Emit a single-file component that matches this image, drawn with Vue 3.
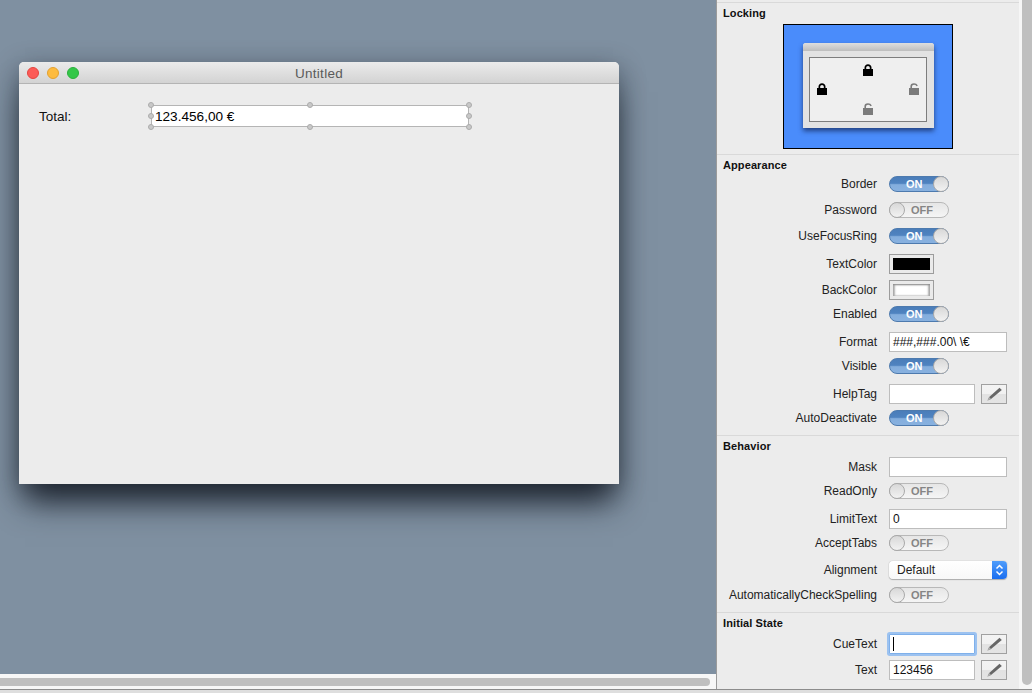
<script setup>
const handles = [
  ['l', 't'], ['c', 't'], ['r', 't'],
  ['l', 'm'], ['r', 'm'],
  ['l', 'b'], ['c', 'b'], ['r', 'b']
]
const sections = [
  {
    title: 'Appearance',
    rows: [
      { label: 'Border', type: 'on' },
      { label: 'Password', type: 'off' },
      { label: 'UseFocusRing', type: 'on' },
      { label: 'TextColor', type: 'color', swatch: 'black' },
      { label: 'BackColor', type: 'color', swatch: 'white' },
      { label: 'Enabled', type: 'on' },
      { label: 'Format', type: 'field', value: '###,###.00\\ \\€' },
      { label: 'Visible', type: 'on' },
      { label: 'HelpTag', type: 'edit', value: '' },
      { label: 'AutoDeactivate', type: 'on' }
    ]
  },
  {
    title: 'Behavior',
    rows: [
      { label: 'Mask', type: 'field', value: '' },
      { label: 'ReadOnly', type: 'off' },
      { label: 'LimitText', type: 'field', value: '0' },
      { label: 'AcceptTabs', type: 'off' },
      { label: 'Alignment', type: 'popup', value: 'Default' },
      { label: 'AutomaticallyCheckSpelling', type: 'off' }
    ]
  },
  {
    title: 'Initial State',
    rows: [
      { label: 'CueText', type: 'edit', value: '', focus: true },
      { label: 'Text', type: 'edit', value: '123456' }
    ]
  }
]
const rowClass = (r) => ({
  on: 'm10', off: 'm10', popup: 'm8'
}[r.type] || 'm6')
</script>

<template>
  <div class="app">
    <div class="main">
      <div class="left">
        <div class="canvas">
          <div class="window">
            <div class="titlebar">
              <div class="lights">
                <span class="light red"></span>
                <span class="light yellow"></span>
                <span class="light green"></span>
              </div>
              <span class="wtitle">Untitled</span>
            </div>
            <div class="wbody">
              <span class="total">Total:</span>
              <div class="selfield">
                <span class="seltext">123.456,00 €</span>
                <i v-for="h in handles" :key="h.join()" class="handle" :class="[h[0], h[1]]"></i>
              </div>
            </div>
          </div>
        </div>
        <div class="htrack"><div class="hthumb"></div></div>
      </div>

      <div class="panel">
        <div class="content">
          <section class="section locking">
            <h3 class="head">Locking</h3>
            <div class="lockbox">
              <div class="miniwin">
                <div class="minibar"></div>
                <div class="miniinner">
                  <svg class="lock lock-top" viewBox="0 0 10 12"><path fill="#000" fill-rule="evenodd" d="M1.5 5V3.6C1.5 1.5 3 .2 5 .2s3.5 1.3 3.5 3.4V5H10v7H0V5zM3.2 5h3.6V3.7C6.8 2.6 6 1.9 5 1.9s-1.8.7-1.8 1.8z"/></svg>
                  <div class="midlocks">
                    <svg class="lock" viewBox="0 0 10 12"><path fill="#000" fill-rule="evenodd" d="M1.5 5V3.6C1.5 1.5 3 .2 5 .2s3.5 1.3 3.5 3.4V5H10v7H0V5zM3.2 5h3.6V3.7C6.8 2.6 6 1.9 5 1.9s-1.8.7-1.8 1.8z"/></svg>
                    <svg class="lock" viewBox="0 0 10 12"><path fill="#7b7b7b" d="M0 5h10v7H0z"/><path fill="none" stroke="#7b7b7b" stroke-width="1.6" d="M2.2 5V3.4C2.2 1.9 3.4 1 5 1c1.4 0 2.5.6 3.2 1.8"/></svg>
                  </div>
                  <svg class="lock lock-low" viewBox="0 0 10 12"><path fill="#7b7b7b" d="M0 5h10v7H0z"/><path fill="none" stroke="#7b7b7b" stroke-width="1.6" d="M2.2 5V3.4C2.2 1.9 3.4 1 5 1c1.4 0 2.5.6 3.2 1.8"/></svg>
                </div>
              </div>
            </div>
          </section>

          <section v-for="s in sections" :key="s.title" class="section">
            <h3 class="head">{{ s.title }}</h3>
            <div
              v-for="r in s.rows"
              :key="r.label"
              class="row"
              :class="rowClass(r)"
            >
              <span class="label">{{ r.label }}</span>

              <div v-if="r.type === 'on'" class="switch on">
                <span class="swtext">ON</span><i class="knob"></i>
              </div>
              <div v-else-if="r.type === 'off'" class="switch off">
                <i class="knob"></i><span class="swtext">OFF</span>
              </div>
              <div v-else-if="r.type === 'color'" class="swatch">
                <div class="swatch-in" :class="r.swatch"></div>
              </div>
              <div v-else-if="r.type === 'field'" class="tf wide">{{ r.value }}</div>
              <div v-else-if="r.type === 'popup'" class="popup">
                <span>{{ r.value }}</span>
                <div class="stepper">
                  <svg viewBox="0 0 15 18" width="15" height="18"><path fill="none" stroke="#fff" stroke-width="1.5" d="M4.5 7.5 7.5 4.5l3 3M4.5 10.5l3 3 3-3"/></svg>
                </div>
              </div>
              <template v-else>
                <div class="tf short" :class="{ focus: r.focus }">
                  <i v-if="r.focus" class="caret"></i>{{ r.value }}
                </div>
                <div class="pencil">
                  <svg viewBox="0 0 24 18" width="24" height="18"><path d="M5.5 15.5 7.2 12 17.5 2.8l2.3 2.3L9 14z" fill="#666"/><path d="M5.5 15.500 7.2 12 9 14z" fill="#b0b0b0"/></svg>
                </div>
              </template>
            </div>
          </section>
        </div>
        <div class="vtrack"><div class="vthumb"></div></div>
      </div>
    </div>
    <div class="statusline"></div>
  </div>
</template>

<style scoped>
.app {
  width: 1032px;
  height: 693px;
  overflow: hidden;
  display: flex;
  flex-direction: column;
  font-family: "Liberation Sans", Arial, sans-serif;
  color: #222;
  background: #e4e4e4;
}
.main { display: flex; height: 689px; }
.left { width: 716px; display: flex; flex-direction: column; }
.canvas {
  height: 674px;
  background: #7f90a1;
  padding: 62px 0 0 19px;
  box-sizing: border-box;
  overflow: hidden;
}
.window {
  width: 600px;
  height: 422px;
  background: #ececec;
  border-radius: 5px 5px 0 0;
  box-shadow: 0 24px 30px -6px rgba(20, 26, 36, .85), 0 6px 26px rgba(20, 26, 36, .42);
}
.titlebar {
  height: 21px;
  border-bottom: 1px solid #b4b4b4;
  border-radius: 5px 5px 0 0;
  background: linear-gradient(#ebebeb, #d3d3d3);
  display: flex;
  align-items: center;
  position: relative;
}
.lights { display: flex; gap: 8px; padding-left: 8px; }
.light { width: 12px; height: 12px; border-radius: 50%; box-sizing: border-box; }
.red { background: #fc5b57; border: 1px solid #e5453f; }
.yellow { background: #fdbb3f; border: 1px solid #e4a12f; }
.green { background: #34c749; border: 1px solid #2bb03c; }
.wtitle {
  position: absolute;
  left: 0; right: 0; top: 4px;
  text-align: center;
  font-size: 13.5px;
  line-height: 16px;
  letter-spacing: .3px;
  color: #5a5a5a;
}
.wbody { display: flex; padding: 21px 0 0 20px; align-items: flex-start; }
.total { width: 112px; font-size: 13.5px; line-height: 23px; color: #111; }
.selfield {
  width: 318px;
  height: 22px;
  box-sizing: border-box;
  background: #fff;
  border: 1px solid #b5b5b5;
  position: relative;
  padding-left: 3px;
}
.seltext { font-size: 13.6px; line-height: 21px; color: #000; display: block; }
.handle {
  position: absolute;
  width: 6px;
  height: 6px;
  border-radius: 50%;
  background: #c8c8c8;
  border: 1px solid #ababab;
  box-sizing: border-box;
}
.handle.l { left: -4px; }
.handle.c { left: 155px; }
.handle.r { right: -4px; }
.handle.t { top: -4px; }
.handle.m { top: 7px; }
.handle.b { bottom: -4px; }

.htrack { height: 15px; background: #f7f7f7; padding-top: 4px; box-sizing: border-box; }
.hthumb { width: 710px; height: 8px; background: #bfbfbf; border-radius: 0 4px 4px 0; }

.panel {
  width: 316px;
  box-sizing: border-box;
  border-left: 1px solid #9b9b9b;
  display: flex;
  background: #ececec;
}
.content { width: 302px; padding-top: 2px; }
.vtrack { width: 13px; background: #f6f6f6; padding: 0 0 4px 3px; box-sizing: border-box; }
.vthumb { height: 100%; background: #bfbfbf; border-radius: 0 0 5px 5px; }
.statusline { height: 4px; border-top: 1px solid #8c8c8c; background: #dedede; box-sizing: border-box; }

.section { border-top: 1px solid #d9d9d9; padding-bottom: 9px; }
.section.locking { padding-bottom: 5px; }
.head {
  margin: 0;
  padding-left: 6px;
  height: 21px;
  font-size: 11px;
  font-weight: 700;
  color: #111;
  line-height: 21px;
  letter-spacing: .1px;
}

.lockbox {
  margin-left: 66px;
  width: 170px;
  height: 125px;
  box-sizing: border-box;
  border: 1px solid #000;
  background: #4a8cfb;
  padding: 18px 0 0 19px;
}
.miniwin {
  width: 131px;
  height: 85px;
  background: #e2e2e2;
  border-radius: 3px 3px 0 0;
  box-shadow: 0 3px 5px rgba(20, 40, 90, .75);
}
.minibar {
  height: 8px;
  background: linear-gradient(#dedede, #bdbdbd);
  border-radius: 3px 3px 0 0;
}
.miniinner {
  margin: 6px 0 0 6px;
  width: 118px;
  height: 65px;
  box-sizing: border-box;
  border: 1px solid #7d7d7d;
  background: #efefef;
  display: flex;
  flex-direction: column;
  align-items: center;
}
.lock { width: 10px; height: 12px; display: block; flex: none; }
.lock-top { margin-top: 6px; }
.midlocks {
  margin-top: 7px;
  width: 100%;
  box-sizing: border-box;
  padding: 0 7px;
  display: flex;
  justify-content: space-between;
}
.lock-low { margin-top: 8px; }

.row { display: flex; align-items: center; font-size: 12px; }
.row:last-child { margin-bottom: 0; }
.m10 { margin-bottom: 10px; }
.m8 { margin-bottom: 8px; }
.m6 { margin-bottom: 6px; }
.label {
  width: 160px;
  margin-right: 12px;
  text-align: right;
  color: #222;
  white-space: nowrap;
}

.switch {
  width: 60px;
  height: 16px;
  box-sizing: border-box;
  border-radius: 8px;
  display: flex;
  align-items: center;
  font-size: 11px;
  font-weight: 700;
  position: relative;
}
.switch.on {
  background: linear-gradient(#4a7db9 0, #4f83c0 45%, #84aedd 55%, #88b1df 100%);
  border: 1px solid #4d7aae;
  justify-content: flex-end;
}
.switch.off {
  background: linear-gradient(#e6e6e6, #f5f5f5);
  border: 1px solid #b8b8b8;
}
.swtext { position: absolute; line-height: 14px; }
.on .swtext { left: 16px; color: #fff; }
.off .swtext { left: 21px; color: #858585; }
.knob {
  width: 16px;
  height: 16px;
  box-sizing: border-box;
  border-radius: 50%;
  background: linear-gradient(#d8d8d8, #f2f2f2);
  border: 1px solid #a9a9a9;
  flex: none;
}
.on .knob { margin-right: -1px; }
.off .knob { margin-left: -1px; }

.swatch {
  width: 45px;
  height: 20px;
  box-sizing: border-box;
  border: 1px solid #9c9c9c;
  background: #eaeaea;
  padding: 3px;
}
.swatch-in { height: 100%; }
.swatch-in.black { background: #000; }
.swatch-in.white {
  background: #fff;
  box-shadow: inset 0 1px 2px #8a8a8a, inset 2px 0 2px #b5b5b5, inset -2px 0 2px #b5b5b5;
}

.tf {
  height: 20px;
  box-sizing: border-box;
  background: #fff;
  border: 1px solid #bdbdbd;
  line-height: 18px;
  padding-left: 3px;
  font-size: 12px;
  color: #111;
  display: flex;
  align-items: center;
  white-space: pre;
}
.tf.wide { width: 118px; }
.tf.short { width: 86px; }
.tf.focus {
  border: 1px solid #7fb0ea;
  box-shadow: 0 0 0 2px #9cc2f0;
  border-radius: 1px;
}
.caret { width: 1px; height: 14px; background: #000; display: block; }
.pencil {
  margin-left: 6px;
  width: 26px;
  height: 20px;
  box-sizing: border-box;
  border: 1px solid #a0a0a0;
  background: linear-gradient(#f3f3f3 0, #f1f1f1 50%, #e2e2e2 52%, #e4e4e4 100%);
}
.pencil svg { display: block; }

.popup {
  width: 118px;
  height: 18px;
  box-sizing: border-box;
  background: linear-gradient(#fff, #f8f8f8);
  border-radius: 4px;
  box-shadow: 0 0 1px #8a8a8a, 0 1px 1px #b0b0b0;
  display: flex;
  align-items: center;
  justify-content: space-between;
  padding-left: 8px;
  overflow: hidden;
}
.stepper {
  width: 15px;
  height: 18px;
  background: linear-gradient(#4f9dfb, #1a6ef0);
}
.stepper svg { display: block; }
</style>

<style>
html, body { margin: 0; background: #e4e4e4; }
</style>
